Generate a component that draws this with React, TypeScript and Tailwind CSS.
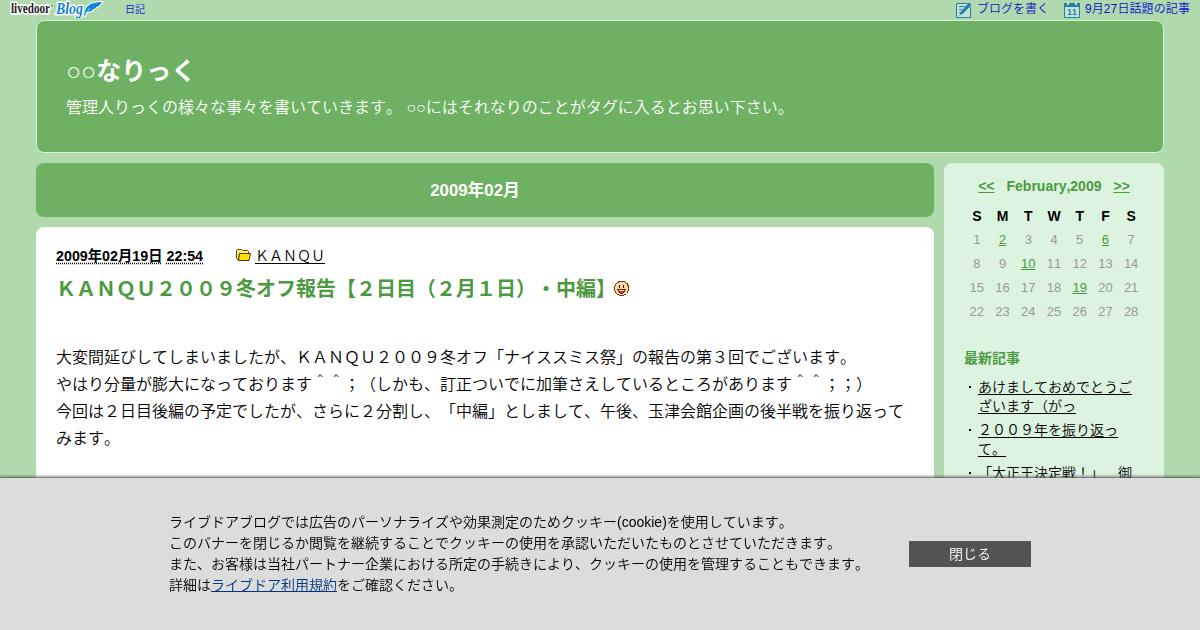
import type React from "react"

interface RecentPost {
  title: string
}

const weekDays = ["S", "M", "T", "W", "T", "F", "S"]
const weeks = [0, 1, 2, 3].map((w) => weekDays.map((_, d) => w * 7 + d + 1))
const linkedDays = [2, 6, 10, 19]

const recentPosts: RecentPost[] = [
  { title: "あけましておめでとうございます（がっ" },
  { title: "２００９年を振り返って。" },
  { title: "「大正王決定戦！」　御" },
]

const Logo: React.FC = () => (
  <svg width="94" height="18" viewBox="0 0 94 18" className="block">
    <g stroke="#fff" strokeWidth="3" strokeLinejoin="round" style={{ paintOrder: "stroke" }}>
      <text transform="translate(1 13) scale(1 1.15)" fontSize="12.5" fontWeight="bold" fontFamily="Liberation Serif, serif" textLength="39" lengthAdjust="spacingAndGlyphs" fill="#222">
        livedoor
      </text>
      <text x="46" y="14" fontSize="16" fontStyle="italic" fontWeight="bold" fontFamily="Liberation Serif, serif" textLength="27" lengthAdjust="spacingAndGlyphs" fill="#1285d4">
        Blog
      </text>
      <circle cx="41.8" cy="5.5" r=".8" fill="#333" strokeWidth="1" />
    </g>
    <path d="M74 15 C75 7 79 2 92 2 L89 6 L86 7 L86 8 L82 10 L82 11 L77 12 L75 16 Z" fill="#1285d4" stroke="#fff" strokeWidth="2" style={{ paintOrder: "stroke" }} />
    <path d="M75 14 L80 8" stroke="#fff" strokeWidth="0.6" />
  </svg>
)

const WriteIcon: React.FC = () => (
  <svg width="16" height="16" viewBox="0 0 16 16" className="mt-[2px] block">
    <path d="M.5 1.5h14v14H.5z" fill="#c4e3d6" stroke="#267fa9" />
    <path d="M3 4.5h6M3 7.5h4M3 10.5h2" stroke="#267fa9" />
    <path d="M13 0l3 3-9 9-4 2 1-4z" fill="#267fa9" stroke="#c4e3d6" strokeWidth=".7" />
  </svg>
)

const CalendarIcon: React.FC = () => (
  <svg width="16" height="16" viewBox="0 0 16 16" className="mt-[2px] block">
    <path d="M.5 1.5h15v14H.5z" fill="#c4e3d6" stroke="#267fa9" />
    <path d="M0 1h16v4H0z" fill="#267fa9" />
    <path d="M3 0h2v3H3zM11 0h2v3h-2z" fill="#c4e3d6" />
    <text x="8" y="13" textAnchor="middle" fontSize="8.5" fontWeight="bold" fontFamily="Liberation Sans, sans-serif" fill="#267fa9">
      11
    </text>
  </svg>
)

const FolderIcon: React.FC = () => (
  <svg width="15" height="14" viewBox="0 0 15 14" className="mr-1 mb-[2px] block">
    <path d="M.5 10.5v-8l1-1h4l1 1h5l1 1v2h-9l-1 7z" fill="#fff36c" stroke="#654d00" />
    <path d="M2.5 12.5l1-7h11l-1.5 7z" fill="#ffdf00" stroke="#4f3b00" strokeLinejoin="round" />
  </svg>
)

const SmileIcon: React.FC = () => (
  <svg width="15" height="15" viewBox="0 0 15 15" className="mt-[5px] -ml-[2px] block" shapeRendering="crispEdges">
    <path d="M5 .5h5l3 2 1.5 3v4l-2 3-3 2h-4l-3-2-2-3v-4l2-3z" fill="#ffd99c" stroke="#6b3b25" />
    <path d="M5 4h1v3H5zM9 4h1v3H9z" fill="#241008" />
    <path d="M3 8h9v1h-1v2h-1v1H9v1H6v-1H5v-1H4V9H3z" fill="#6b2016" />
    <path d="M5 9h5v1H5z" fill="#fff0d5" />
    <path d="M6 10h3v2H6z" fill="#e0402c" />
  </svg>
)

const TopBar: React.FC = () => (
  <div className="flex h-5 items-start justify-between pr-[10px] pl-[10px] text-[12px] leading-[18px] text-[#0a13cf]">
    <div className="flex">
      <Logo />
      <a href="#" className="ml-[21px] pt-[1px] text-[10px]">日記</a>
    </div>
    <div className="flex">
      <WriteIcon />
      <a href="#" className="mr-[15px] ml-[5px]">ブログを書く</a>
      <CalendarIcon />
      <a href="#" className="ml-[5px] tracking-[0.1px]">9月27日話題の記事</a>
    </div>
  </div>
)

const Sidebar: React.FC = () => (
  <aside className="h-[600px] w-[220px] rounded-[8px] bg-[#dcf3df] px-5 pt-[13px] text-[14px]">
    <div className="flex justify-center gap-3 leading-5 font-bold text-[#4c9a3f]">
      <a href="#" className="underline">&lt;&lt;</a>
      <span>February,2009</span>
      <a href="#" className="underline">&gt;&gt;</a>
    </div>
    <div className="mt-2 grid grid-cols-7 text-center text-[13px] leading-6 text-[#999]">
      {weekDays.map((day, index) => (
        <b key={index} className="text-[14px] font-bold text-black">{day}</b>
      ))}
      {weeks.flat().map((day) =>
        linkedDays.includes(day) ? (
          <a key={day} href="#" className="text-[#4c9a3f] underline">{day}</a>
        ) : (
          <span key={day}>{day}</span>
        )
      )}
    </div>
    <h3 className="mt-6 leading-5 font-bold text-[#4c9a3f]">最新記事</h3>
    <ul className="mt-[10px] space-y-[5px] leading-[19px]">
      {recentPosts.map((post) => (
        <li key={post.title} className="flex">
          <span className="mt-[8px] mr-[7px] ml-[5px] size-[2px] shrink-0 bg-black" />
          <a href="#" className="w-[155px] underline underline-offset-2">{post.title}</a>
        </li>
      ))}
    </ul>
  </aside>
)

const CookieBanner: React.FC = () => (
  <div className="fixed inset-x-0 bottom-0 flex h-[152px] items-center bg-[#dcdcdc] pl-[169px] shadow-[0_0_3px_1px_#444]">
    <p className="w-[740px] text-[14px] leading-[21px] whitespace-nowrap">
      ライブドアブログでは広告のパーソナライズや効果測定のためクッキー(cookie)を使用しています。
      <br />
      このバナーを閉じるか閲覧を継続することでクッキーの使用を承認いただいたものとさせていただきます。
      <br />
      また、お客様は当社パートナー企業における所定の手続きにより、クッキーの使用を管理することもできます。
      <br />
      詳細は<a href="#" className="text-[#003586] underline">ライブドア利用規約</a>をご確認ください。
    </p>
    <button className="h-[26px] w-[122px] bg-[#535353] text-[14px] leading-[25px] text-white">閉じる</button>
  </div>
)

const App: React.FC = () => {
  return (
    <div className="h-[630px] overflow-hidden bg-[#b0d9ad] font-['Liberation_Sans','Noto_Sans_CJK_JP',sans-serif] [font-weight:350] text-black [font-kerning:none] [text-spacing-trim:space-all]">
      <TopBar />
      <div className="mx-auto w-[1128px]">
        <header className="h-[133px] rounded-[8px] border border-[#d6f5d4] bg-[#6eb163] px-[29px] pt-[33px] text-white">
          <h1 className="text-[25px] leading-[34px] font-bold">○○なりっく</h1>
          <p className="mt-[8px] text-[16px] leading-6">管理人りっくの様々な事々を書いていきます。 ○○にはそれなりのことがタグに入るとお思い下さい。</p>
        </header>
        <div className="mt-[10px] flex gap-[10px]">
          <main className="w-[898px]">
            <h2 className="h-[54px] rounded-[8px] bg-[#6eb163] pr-[20px] text-center text-[16.8px] leading-[55px] font-bold text-white">2009年02月</h2>
            <article className="mt-[10px] h-[500px] rounded-[8px] bg-white px-5 pt-[19px]">
              <div className="flex h-5 items-center text-[14px] leading-5">
                <b className="w-[180px] text-[14.3px] font-bold">
                  <span className="underline decoration-dotted underline-offset-2">2009年02月19日</span>{" "}
                  <span className="underline decoration-dotted underline-offset-2">22:54</span>
                </b>
                <FolderIcon />
                <a href="#" className="underline underline-offset-2">ＫＡＮＱＵ</a>
              </div>
              <h2 className="mt-[10px] flex text-[20px] leading-[26px] font-bold text-[#4c9a3f]">
                ＫＡＮＱＵ２００９冬オフ報告【２日目（２月１日）・中編】
                <SmileIcon />
              </h2>
              <p className="mt-[42px] text-[16px] leading-[27px]">
                大変間延びしてしまいましたが、ＫＡＮＱＵ２００９冬オフ「ナイススミス祭」の報告の第３回でございます。
                <br />
                やはり分量が膨大になっております＾＾；（しかも、訂正ついでに加筆さえしているところがあります＾＾；；）
                <br />
                今回は２日目後編の予定でしたが、さらに２分割し、「中編」としまして、午後、玉津会館企画の後半戦を振り返ってみます。
              </p>
            </article>
          </main>
          <Sidebar />
        </div>
      </div>
      <CookieBanner />
    </div>
  )
}

export default App
